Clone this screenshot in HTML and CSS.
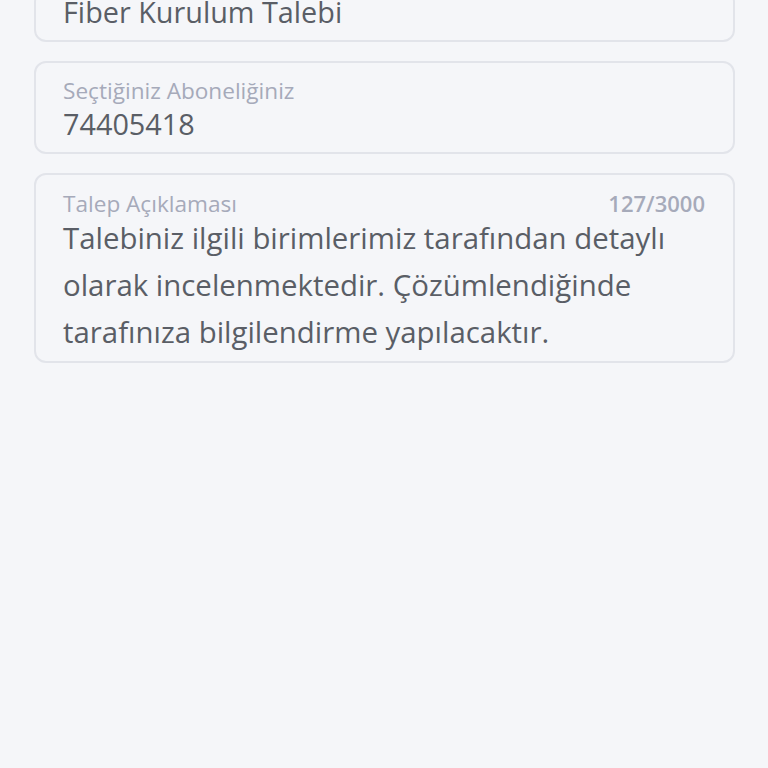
FILE: index.html
```html
<!DOCTYPE html>
<html lang="tr">
<head>
    <meta charset="UTF-8">
    <meta name="viewport" content="width=device-width, initial-scale=1.0">
    <title>Talep Detayı</title>
    <link rel="stylesheet" href="styles.css">
</head>
<body>
    <div class="form">
        <!-- Talep konusu (label scrolled out of view) -->
        <div class="field field-top">
            <div class="field-value">Fiber Kurulum Talebi</div>
        </div>

        <!-- Abonelik -->
        <div class="field">
            <div class="field-label">Seçtiğiniz Aboneliğiniz</div>
            <div class="field-value">74405418</div>
        </div>

        <!-- Açıklama -->
        <div class="field">
            <div class="field-head">
                <div class="field-label">Talep Açıklaması</div>
                <div class="counter">127/3000</div>
            </div>
            <div class="field-text">Talebiniz ilgili birimlerimiz tarafından detaylı olarak incelenmektedir. Çözümlendiğinde tarafınıza bilgilendirme yapılacaktır.</div>
        </div>
    </div>
</body>
</html>
```

FILE: styles.css
```css
* {
    margin: 0;
    padding: 0;
    box-sizing: border-box;
}

body {
    font-family: "Open Sans", "Noto Sans", sans-serif;
    background-color: #f5f6f9;
    color: #5a5e66;
    height: 100vh;
    overflow: hidden;
}

/* page is scrolled, first card is cut at the top */
.form {
    display: flex;
    flex-direction: column;
    gap: 19px;
    padding: 0 33px 0 34px;
    margin-top: -10px;
}

.field {
    border: 2px solid #e2e4ea;
    border-radius: 12px;
    padding: 12.5px 28px 9.5px 27px;
}

.field-top {
    padding-top: 0.5px;
}

.field-head {
    display: flex;
    justify-content: space-between;
    align-items: baseline;
}

.field-label {
    font-size: 22.6px;
    line-height: 29px;
    color: #a6aaba;
}

.field-head .field-label {
    line-height: 28px;
}

.counter {
    font-size: 22px;
    font-weight: 600;
    color: #a6aaba;
}

.field-value {
    font-size: 28.8px;
    line-height: 38px;
}

.field-text {
    font-size: 29.4px;
    line-height: 47px;
    margin-top: -3px;
    margin-bottom: -4.5px;
}
```
